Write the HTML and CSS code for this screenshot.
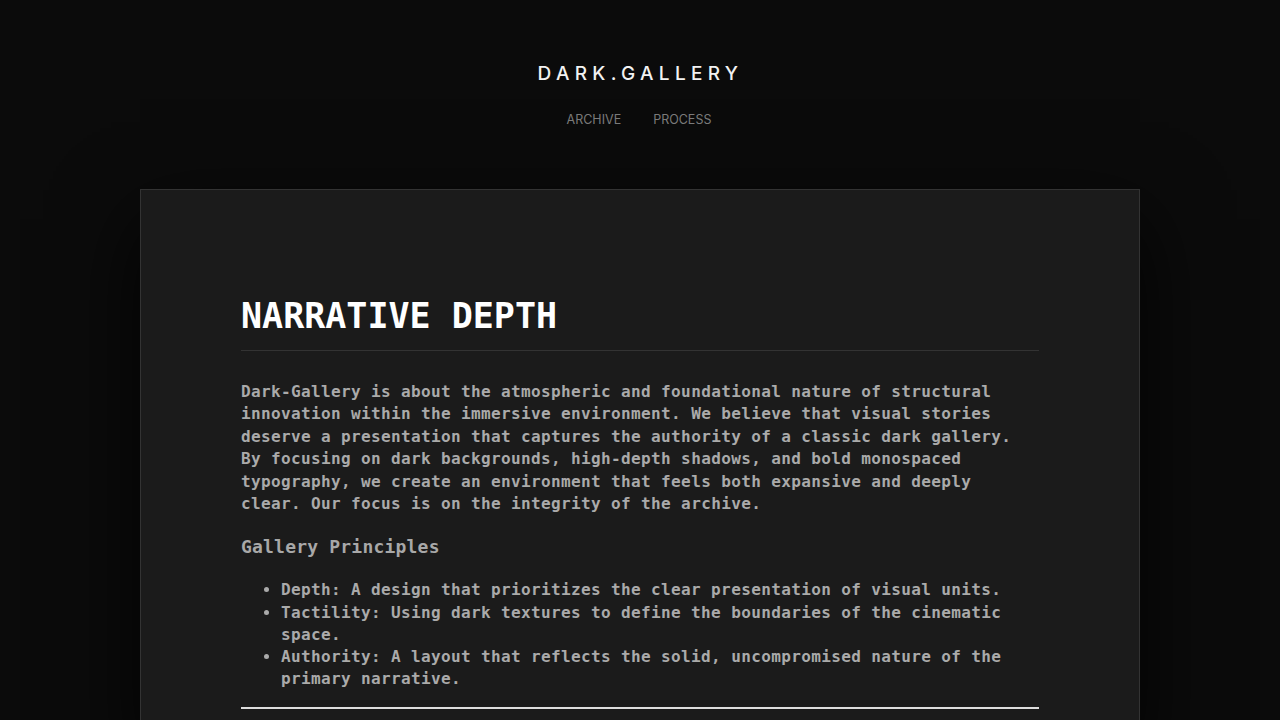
FILE: index.html
```html
<!DOCTYPE html>
<html lang="en">
<head>
<meta charset="utf-8">
<title>Dark Gallery</title>
<link rel="stylesheet" href="styles.css">
</head>
<body>
<header class="site-header">
  <div class="brand">DARK.GALLERY</div>
  <nav class="nav">
    <a href="#" class="nav-link">ARCHIVE</a>
    <a href="#" class="nav-link">PROCESS</a>
  </nav>
</header>
<main class="card">
  <h1 class="title">NARRATIVE DEPTH</h1>
  <p class="lead">Dark-Gallery is about the atmospheric and foundational nature of structural innovation within the immersive environment. We believe that visual stories deserve a presentation that captures the authority of a classic dark gallery. By focusing on dark backgrounds, high-depth shadows, and bold monospaced typography, we create an environment that feels both expansive and deeply clear. Our focus is on the integrity of the archive.</p>
  <h2 class="subtitle">Gallery Principles</h2>
  <ul class="principles">
    <li>Depth: A design that prioritizes the clear presentation of visual units.</li>
    <li>Tactility: Using dark textures to define the boundaries of the cinematic space.</li>
    <li>Authority: A layout that reflects the solid, uncompromised nature of the primary narrative.</li>
  </ul>
  <hr class="rule">
</main>
</body>
</html>
```
FILE: styles.css
```css
* { box-sizing: border-box; }
html, body { margin: 0; padding: 0; }
body {
  background: #0b0b0b;
  color: #aaa;
  font-family: "DejaVu Sans Mono", "Liberation Mono", monospace;
  min-height: 100vh;
}
.site-header {
  display: flex;
  flex-direction: column;
  align-items: center;
  padding-top: 63px;
  gap: 27px;
}
.brand {
  font-family: Inter, "Noto Sans", sans-serif;
  font-size: 19px;
  font-weight: 500;
  letter-spacing: 0.28em;
  color: #f2f2f2;
  line-height: 22px;
  margin-right: -1px;
}
.nav {
  display: flex;
  gap: 32px;
  margin-left: -2px;
}
.nav-link {
  font-family: Inter, "Noto Sans", sans-serif;
  font-size: 12.5px;
  color: #7a7a7a;
  text-decoration: none;
  line-height: 16px;
}
.card {
  width: 1000px;
  margin: 61px auto 0;
  background: #1b1b1b;
  border: 1px solid #333;
  padding: 100px 100px 40px;
  box-shadow: 0 30px 80px rgba(0, 0, 0, 0.85);
}
.title {
  margin: 0;
  font-family: "DejaVu Sans Mono", "Liberation Mono", monospace;
  font-size: 35px;
  font-weight: 700;
  color: #fff;
  line-height: 52px;
  padding-bottom: 8px;
  border-bottom: 1px solid #333;
}
.lead {
  margin: 30px 0 0;
  max-width: 772px;
  font-size: 16px;
  font-weight: 700;
  letter-spacing: 0.37px;
  line-height: 22.4px;
  color: #aaa;
}
.subtitle {
  margin: 18px 0 0;
  font-size: 18px;
  font-weight: 700;
  line-height: 28px;
  color: #a8a8a8;
  letter-spacing: 0.2px;
}
.principles {
  margin: 18px 0 0;
  padding-left: 40px;
  font-size: 16px;
  font-weight: 700;
  letter-spacing: 0.37px;
  line-height: 22.4px;
  color: #aaa;
}
.principles li + li { margin-top: -0.3px; }
.rule {
  margin: 16px 0 0;
  border: 0;
  height: 2px;
  background: #ddd;
}
```
